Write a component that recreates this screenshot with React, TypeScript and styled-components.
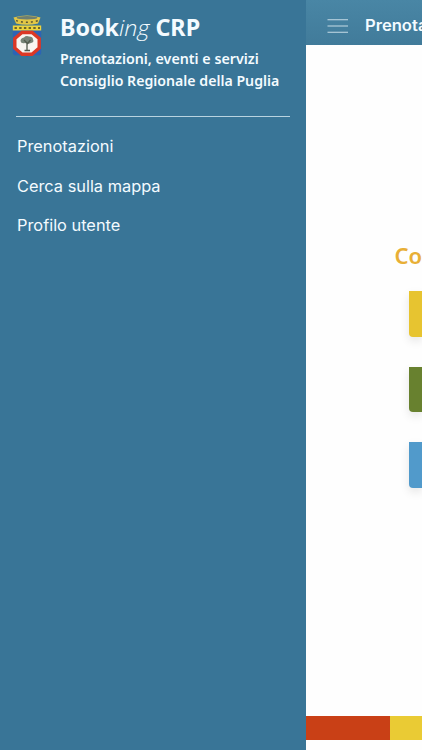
import styled, { createGlobalStyle } from 'styled-components';

const GlobalStyle = createGlobalStyle`
  * {
    box-sizing: border-box;
  }

  body {
    margin: 0;
    overflow: hidden;
    background: #fff;
  }
`;

const Layout = styled.div`
  display: flex;
  width: 100vw;
  height: 100vh;
  overflow: hidden;
`;

const Sidebar = styled.aside`
  flex: 0 0 305.5px;
  padding: 15px 15.5px 0 12px;
  background: #397597;
  color: #f4fbff;
`;

const Brand = styled.header`
  display: flex;
  gap: 18px;
  height: 101px;
`;

const Crest = styled.svg`
  flex: none;
  width: 30px;
  height: 43px;
`;

const BrandText = styled.div`
  font-family: 'Noto Sans', sans-serif;
  white-space: nowrap;
`;

const Line = styled.span<{ $stretch: number }>`
  display: block;
  width: max-content;
  transform: scaleX(${({ $stretch }) => $stretch});
  transform-origin: left;
`;

const Title = styled.h1`
  margin: 0;
  font-size: 22.5px;
  line-height: 25px;
  font-weight: 700;

  em {
    font-weight: 350;
    font-family: 'Open Sans', sans-serif;
  }
`;

const Subtitle = styled.p`
  margin: 7px 0 0;
  font-size: 14.5px;
  line-height: 22px;
  font-weight: 600;
`;

const Divider = styled.hr`
  height: 1px;
  margin: 0 0 0 4px;
  border: 0;
  background: #b9d3e0;
`;

const Menu = styled.nav`
  display: flex;
  flex-direction: column;
  padding: 10px 0 0 4.5px;
`;

const MenuItem = styled.a`
  height: 39.5px;
  font-family: Inter, sans-serif;
  font-size: 15.5px;
  line-height: 39.5px;
  white-space: nowrap;
`;

const Page = styled.main`
  flex: 1;
  min-width: 0;
  display: flex;
  flex-direction: column;
  overflow: hidden;
  background: #fefefe;
`;

const TopBar = styled.header`
  display: flex;
  align-items: center;
  gap: 16px;
  height: 45px;
  padding: 6px 0 0 21px;
  background: linear-gradient(#4986a5, #417b9a);
  color: #f4fbff;
  font-family: Inter, sans-serif;
  font-size: 15.5px;
  font-weight: 600;
  white-space: nowrap;
`;

const MenuIcon = styled.svg`
  flex: none;
  width: 22px;
  height: 16px;
`;

const Content = styled.section`
  flex: 1;
  padding: 194px 0 0 89px;
`;

const Question = styled.h2`
  margin: 0 0 20px;
  color: #e8af36;
  font-family: 'Noto Sans', sans-serif;
  font-size: 22px;
  line-height: 32px;
  font-weight: 600;
`;

const Cards = styled.div`
  display: flex;
  flex-direction: column;
  gap: 30px;
  padding-left: 14.5px;
`;

const Card = styled.div<{ $color: string }>`
  height: 45.5px;
  border-radius: 0 0 0 4px;
  background: ${({ $color }) => $color};
  box-shadow: 0 4px 10px rgba(0, 0, 0, 0.1);
`;

const Stripes = styled.footer`
  display: flex;
  height: 24px;
  margin-bottom: 10px;
`;

const Stripe = styled.div<{ $color: string; $width?: string }>`
  flex: ${({ $width }) => ($width ? `0 0 ${$width}` : '1')};
  background: ${({ $color }) => $color};
`;

const menu = ['Prenotazioni', 'Cerca sulla mappa', 'Profilo utente'];

const cards = ['#e7c430', '#68812f', '#519acb'];

const CrestIcon = () => (
  <Crest viewBox="0 0 30 43">
    {/* crown */}
    <path d="M1.5 2.5Q15-1.5 28.5 2.5L26 8.5Q15 11 4 8.5Z" fill="#e3c745" />
    <ellipse cx="15" cy="2.8" rx="10.5" ry="1.7" fill="#6d7f72" />
    <path
      d="M4 5.6Q15 8.8 26 5.6"
      fill="none"
      stroke="#5a5635"
      strokeWidth="1.5"
      strokeDasharray="2 3"
    />
    {/* shield */}
    <path d="M.8 11H29.2V38Q29 40.3 26 40.3H18L15 42L12 40.3H4Q1 40.3.8 38Z" fill="#2d64b5" />
    <path d="M.8 10.5H29.2V15.5H.8Z" fill="#ecd43d" />
    <path d="M2.5 13H28" stroke="#6d642b" strokeWidth="2.2" strokeDasharray="2.4 2.3" />
    <path
      d="M10 17.5H20L27.2 23.5V33L20 39.2H10L2.8 33V23.5Z"
      fill="#f9f5f0"
      stroke="#dc3825"
      strokeWidth="3.4"
    />
    {/* olive tree */}
    <path
      d="M8.5 26Q8.5 23 12 22.5Q14 20.3 17 21.5Q21 21.5 21 24.5Q22.5 27 19 28Q16 29.5 13 28Q9 29 8.5 26Z"
      fill="#788477"
    />
    <path
      d="M15 35.5V28L12 25M15.2 29L18.5 25M12.5 35.5H18"
      fill="none"
      stroke="#535a4d"
      strokeWidth="1.3"
    />
  </Crest>
);

const App = () => {
  return (
    <>
      <GlobalStyle />
      <Layout>
        <Sidebar>
          <Brand>
            <CrestIcon />
            <BrandText>
              <Title>
                <Line $stretch={1.035}>
                  Book<em>ing</em> CRP
                </Line>
              </Title>
              <Subtitle>
                <Line $stretch={0.983}>Prenotazioni, eventi e servizi</Line>
                <Line $stretch={0.976}>Consiglio Regionale della Puglia</Line>
              </Subtitle>
            </BrandText>
          </Brand>
          <Divider />
          <Menu>
            {menu.map((label) => (
              <MenuItem key={label}>
                <Line $stretch={1.055}>{label}</Line>
              </MenuItem>
            ))}
          </Menu>
        </Sidebar>
        <Page>
          <TopBar>
            <MenuIcon viewBox="0 0 22 16">
              <path d="M.5 1.8H21M.5 8H21M.5 14.2H21" stroke="#c6dce6" strokeWidth="1.1" />
            </MenuIcon>
            <Line $stretch={1.07}>Prenota</Line>
          </TopBar>
          <Content>
            <Question>Co</Question>
            <Cards>
              {cards.map((color) => (
                <Card key={color} $color={color} />
              ))}
            </Cards>
          </Content>
          <Stripes>
            <Stripe $color="#c94016" $width="84.5px" />
            <Stripe $color="#eacb34" />
          </Stripes>
        </Page>
      </Layout>
    </>
  );
};

export default App;
